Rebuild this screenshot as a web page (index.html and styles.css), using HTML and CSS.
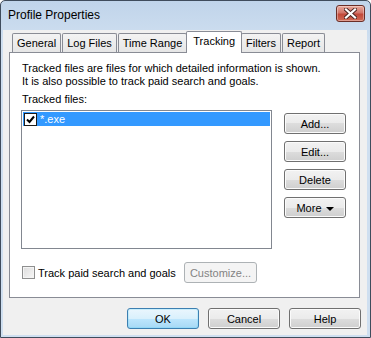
FILE: index.html
```html
<!DOCTYPE html>
<html lang="en">
<head>
    <meta charset="UTF-8">
    <meta name="viewport" content="width=device-width, initial-scale=1.0">
    <title>Profile Properties</title>
    <link rel="stylesheet" href="styles.css">
</head>
<body>
    <div class="window">
        <div class="titlebar">
            <span class="title">Profile Properties</span>
            <div class="close-button">
                <svg width="13" height="11" viewBox="0 0 13 11">
                    <path d="M2 1.5 L11 9.5 M11 1.5 L2 9.5" stroke="#4a2320" stroke-width="4" stroke-linecap="square"/>
                    <path d="M2 1.5 L11 9.5 M11 1.5 L2 9.5" stroke="#ffffff" stroke-width="2.2" stroke-linecap="square"/>
                </svg>
            </div>
        </div>

        <div class="client">
            <div class="tabs">
                <div class="tab">General</div>
                <div class="tab">Log Files</div>
                <div class="tab">Time Range</div>
                <div class="tab active">Tracking</div>
                <div class="tab">Filters</div>
                <div class="tab">Report</div>
            </div>

            <div class="tab-page">
                <p class="intro">Tracked files are files for which detailed information is shown.<br>It is also possible to track paid search and goals.</p>
                <div class="field-label">Tracked files:</div>

                <div class="files-row">
                    <div class="file-list">
                        <div class="file-item selected">
                            <span class="item-check">
                                <svg width="9" height="9" viewBox="0 0 9 9">
                                    <path d="M1 4.5 L3.5 7 L8 1.5" fill="none" stroke="#000" stroke-width="2"/>
                                </svg>
                            </span>
                            <span>*.exe</span>
                        </div>
                    </div>
                    <div class="side-buttons">
                        <button class="btn side-btn">Add...</button>
                        <button class="btn side-btn">Edit...</button>
                        <button class="btn side-btn">Delete</button>
                        <button class="btn side-btn">More <span class="arrow"></span></button>
                    </div>
                </div>

                <div class="paid-row">
                    <label class="check-label"><span class="checkbox"></span>Track paid search and goals</label>
                    <button class="btn customize-btn" disabled>Customize...</button>
                </div>
            </div>

            <div class="dialog-buttons">
                <button class="btn dialog-btn default">OK</button>
                <button class="btn dialog-btn">Cancel</button>
                <button class="btn dialog-btn">Help</button>
            </div>
        </div>
    </div>
</body>
</html>
```

FILE: styles.css
```css
body {
    margin: 0;
    font-family: "Liberation Sans", Arial, sans-serif;
    font-size: 11px;
    color: #000;
}

.window {
    width: 371px;
    height: 338px;
    box-sizing: border-box;
    border: 1px solid #3f4c5c;
    border-radius: 5px 5px 0 0;
    background: linear-gradient(#c0d4ea, #cfdff0 40px, #cfdff0);
    padding: 0 3px 2px 2px;
    display: flex;
    flex-direction: column;
}

.titlebar {
    height: 29px;
    display: flex;
    justify-content: space-between;
    padding-left: 5px;
}

.title {
    font-size: 12px;
    line-height: 29px;
}

.close-button {
    width: 29px;
    height: 17px;
    margin-top: 4px;
    margin-right: 2px;
    box-sizing: border-box;
    border: 1px solid #6b2e27;
    border-radius: 3px;
    background: linear-gradient(#e9a99b, #d2756a 45%, #c2493a 55%, #d06a55);
    box-shadow: inset 0 0 0 1px rgba(255, 255, 255, 0.35);
    display: flex;
    align-items: center;
    justify-content: center;
}

.client {
    flex: 1;
    background-color: #f0f0f0;
    padding: 1px 7px 0 6px;
}

/* tab strip */
.tabs {
    display: flex;
    align-items: flex-end;
    height: 21px;
    padding-left: 3px;
}

.tab {
    height: 18px;
    line-height: 18px;
    padding: 0 4px;
    margin-right: 1px;
    border: 1px solid #898c95;
    border-bottom: none;
    border-radius: 2px 2px 0 0;
    background: linear-gradient(#f3f3f3, #e6e6e6);
}

.tab.active {
    position: relative;
    z-index: 1;
    height: 21px;
    line-height: 19px;
    margin: 0 -1px -1px -2px;
    padding: 0 6px;
    background: #ffffff;
}

.tab.active + .tab {
    margin-left: 0;
}

.tab-page {
    height: 246px;
    box-sizing: border-box;
    border: 1px solid #898c95;
    background-color: #ffffff;
    padding: 9px 11px 0 11px;
}

.intro {
    margin: 0 0 5px 1px;
    line-height: 13px;
}

.field-label {
    margin: 0 0 4px 1px;
    line-height: 13px;
}

.files-row {
    display: flex;
}

.file-list {
    width: 251px;
    height: 139px;
    box-sizing: border-box;
    border: 1px solid #828790;
    background: #fff;
    padding: 1px;
}

.file-item {
    height: 14px;
    display: flex;
    align-items: center;
    padding-left: 1px;
    color: #fff;
}

.file-item.selected {
    background-color: #3399ff;
}

.item-check {
    width: 11px;
    height: 11px;
    border: 1px solid #1c1c1c;
    background: #fff;
    margin-right: 3px;
    display: flex;
    align-items: center;
    justify-content: center;
}

.side-buttons {
    display: flex;
    flex-direction: column;
    gap: 7px;
    margin-left: 12px;
    padding-top: 3px;
}

/* buttons */
.btn {
    font-family: "Liberation Sans", Arial, sans-serif;
    font-size: 11px;
    color: #000;
    border: 1px solid #707070;
    border-radius: 3px;
    background: linear-gradient(#f2f2f2, #ebebeb 50%, #dddddd 50%, #cfcfcf);
    box-shadow: inset 0 0 0 1px #fbfbfb;
    padding: 0;
}

.side-btn {
    width: 62px;
    height: 21px;
}

.arrow {
    display: inline-block;
    width: 0;
    height: 0;
    border-left: 4px solid transparent;
    border-right: 4px solid transparent;
    border-top: 4px solid #000;
    vertical-align: 1px;
    margin-left: 1px;
}

.paid-row {
    display: flex;
    align-items: center;
    margin-top: 13px;
}

.check-label {
    width: 162px;
    display: flex;
    align-items: center;
    margin-left: 1px;
}

.checkbox {
    width: 11px;
    height: 11px;
    border: 1px solid #8e8f8f;
    background: linear-gradient(135deg, #dcdcdc, #f7f7f7);
    box-shadow: inset 0 0 0 1px #f4f4f4;
    margin-right: 3px;
}

.customize-btn {
    width: 73px;
    height: 21px;
    color: #838383;
    border-color: #adb2b5;
    background: #f4f4f4;
    box-shadow: none;
}

.dialog-buttons {
    display: flex;
    justify-content: flex-end;
    gap: 9px;
    margin-top: 10px;
    margin-right: -1px;
}

.dialog-btn {
    width: 72px;
    height: 21px;
}

.dialog-btn.default {
    border-color: #3c7fb1;
    background: linear-gradient(#eaf6fd, #d9f0fc 50%, #bee6fd 50%, #a7d9f5);
    box-shadow: inset 0 0 0 1px #48d2fc33;
}
```
